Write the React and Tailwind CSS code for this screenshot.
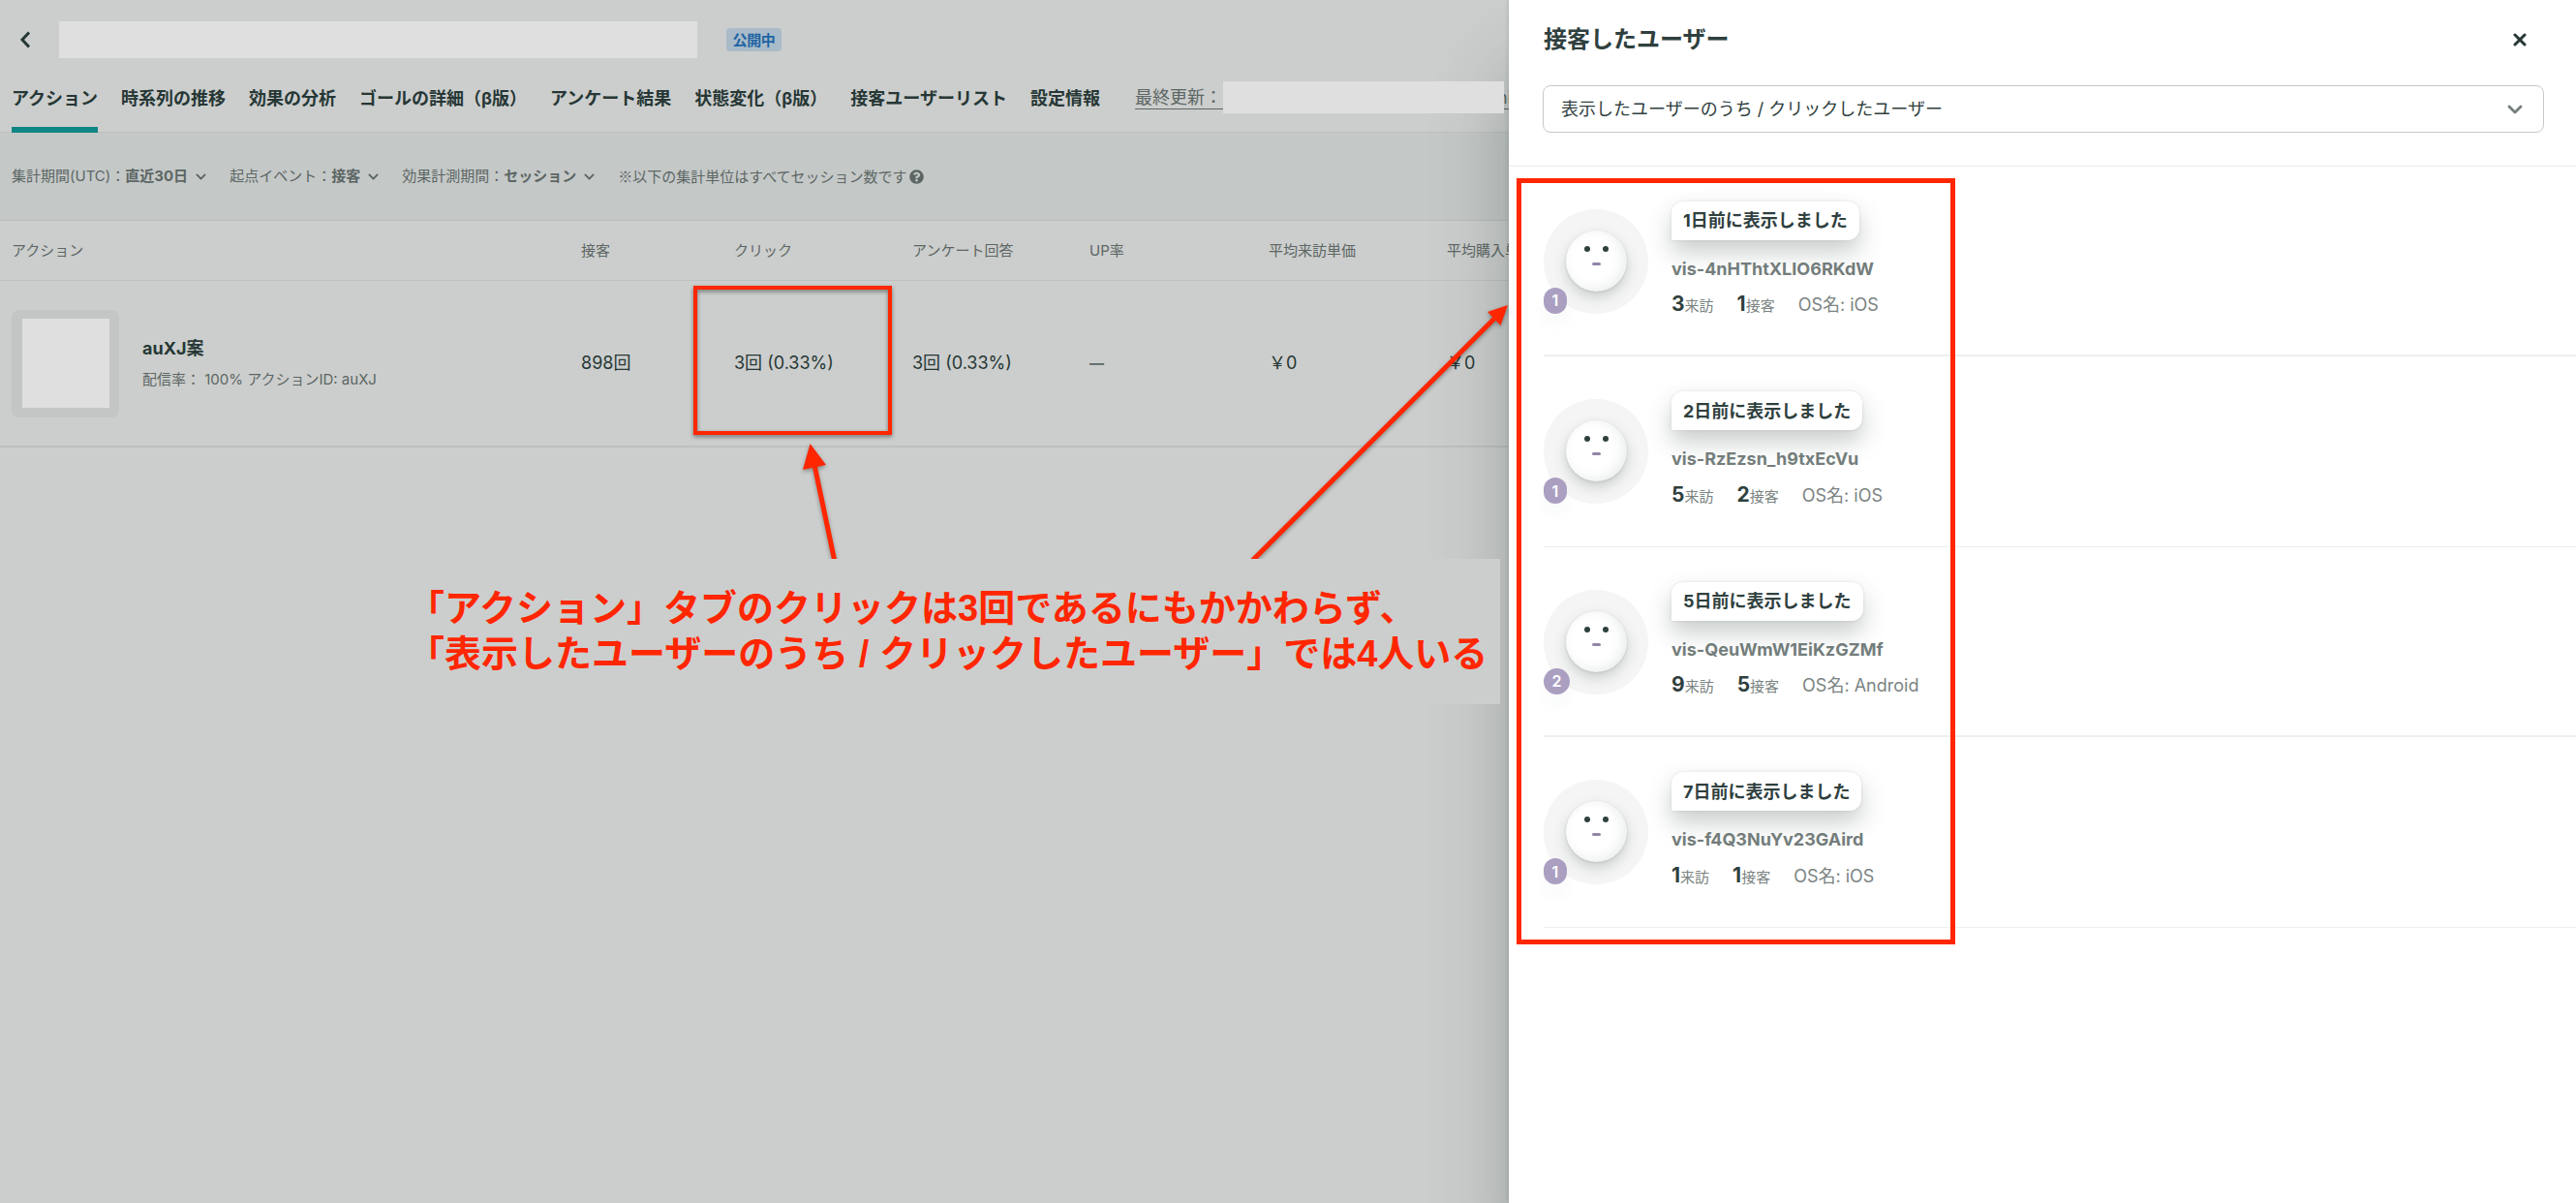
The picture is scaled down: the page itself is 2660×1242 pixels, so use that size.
import React from 'react';
import { FaQuestionCircle } from 'react-icons/fa';

const tabs = [
  'アクション',
  '時系列の推移',
  '効果の分析',
  'ゴールの詳細（β版）',
  'アンケート結果',
  '状態変化（β版）',
  '接客ユーザーリスト',
  '設定情報',
];

const filters = [
  { label: '集計期間(UTC)：', value: '直近30日' },
  { label: '起点イベント：', value: '接客' },
  { label: '効果計測期間：', value: 'セッション' },
];

const users = [
  { badge: 1, when: '1日前に表示しました', id: 'vis-4nHThtXLIO6RKdW', visits: 3, served: 1, os: 'iOS', line: 'border-b-2' },
  { badge: 1, when: '2日前に表示しました', id: 'vis-RzEzsn_h9txEcVu', visits: 5, served: 2, os: 'iOS', line: 'border-b' },
  { badge: 2, when: '5日前に表示しました', id: 'vis-QeuWmW1EiKzGZMf', visits: 9, served: 5, os: 'Android', line: 'border-b-2' },
  { badge: 1, when: '7日前に表示しました', id: 'vis-f4Q3NuYv23GAird', visits: 1, served: 1, os: 'iOS', line: 'border-b' },
];

const columns = 'grid grid-cols-[588px_158px_184px_183px_185px_184px_184px] pl-3 items-center';

const Chevron = ({ className }) => (
  <svg viewBox="0 0 16 10" fill="none" stroke="currentColor" strokeLinecap="round" strokeLinejoin="round" className={className}>
    <path d="M2 2l6 6 6-6" strokeWidth="2.8" />
  </svg>
);

const Header = () => (
  <header className="h-[137px] border-b border-[#bdc0bf]">
    <div className="flex h-[82px] items-center pl-5">
      <svg viewBox="0 0 12 18" fill="none" stroke="#263735" strokeWidth="3" className="h-[18px] w-3">
        <path d="M10 1.5L3 9l7 7.5" />
      </svg>
      <div className="ml-[29px] h-[38px] w-[659px] bg-[#dfdfdf]" />
      <span className="ml-[30px] flex h-6 w-[57px] items-center justify-center rounded bg-[#a9bbc9] pt-0.5 text-[15px] font-bold tracking-[-0.3px] text-[#1f65a3]">
        公開中
      </span>
    </div>
    <nav className="flex h-[55px] gap-6 pl-3 text-[18px] font-bold text-[#263735]">
      {tabs.map((tab, i) => (
        <a key={tab} className={`flex h-[55px] shrink-0 items-center whitespace-nowrap ${i === 0 ? 'border-b-[6px] border-[#0e8683] pb-[10px]' : 'pb-4'}`}>
          {tab}
        </a>
      ))}
      <div className="ml-3 flex h-[39px] shrink-0 items-center whitespace-nowrap font-normal text-[#5c6664]">
        <span className="w-[91px] border-b border-[#5c6664] leading-[22px]">最終更新：</span>
        <span className="relative z-10 -mt-0.5 h-[33px] w-[290px] shrink-0 bg-[#dfdfdf]" />
        <span className="-ml-[7px] border-b border-[#5c6664] leading-[22px]">ni</span>
      </div>
    </nav>
  </header>
);

const Filters = () => (
  <div className="flex h-[91px] items-center border-b border-[#b8bcbb] bg-[#c4c8c7] pl-3 text-[15px] text-[#5c6664]">
    {filters.map((f) => (
      <div key={f.label} className="mr-6 flex items-center whitespace-nowrap">
        {f.label}
        <b>{f.value}</b>
        <Chevron className="ml-2 h-[7px] w-[11px]" />
      </div>
    ))}
    <span className="whitespace-nowrap font-['Noto_Sans_CJK_JP',sans-serif]">※以下の集計単位はすべてセッション数です</span>
    <FaQuestionCircle className="ml-0.5 size-[15px]" />
  </div>
);

const Table = () => (
  <section>
    <div className={`${columns} h-[62px] whitespace-nowrap border-b border-[#bdc0bf] pt-0.5 text-[15px] text-[#5c6664]`}>
      <span>アクション</span>
      <span>接客</span>
      <span>クリック</span>
      <span>アンケート回答</span>
      <span>UP率</span>
      <span>平均来訪単価</span>
      <span>平均購入単価</span>
    </div>
    <div className={`${columns} h-[172px] whitespace-nowrap border-b-2 border-[#bdc0bf] text-[18px] text-[#263735]`}>
      <div className="flex items-center">
        <div className="flex size-[111px] items-center justify-center rounded-lg bg-[#c3c6c5]">
          <div className="h-[92px] w-[90px] bg-[#dfdfdf]" />
        </div>
        <div className="ml-6 flex flex-col gap-2 pt-0.5">
          <b className="leading-6">auXJ案</b>
          <span className="text-[15px] leading-6 text-[#5c6664]">配信率： 100% アクションID: auXJ</span>
        </div>
      </div>
      <span className="pb-0.5">898回</span>
      <span className="pb-0.5">3回 (0.33%)</span>
      <span className="pb-0.5">3回 (0.33%)</span>
      <span className="text-[15px] font-bold text-[#5c6664]">—</span>
      <span className="pb-0.5">￥0</span>
      <span className="pb-0.5">￥0</span>
    </div>
  </section>
);

const Avatar = ({ count }) => (
  <div className="relative mt-2 size-[108px] shrink-0 rounded-full bg-[#f5f5f5]">
    <div className="absolute left-[23px] top-[22px] size-[63px] rounded-full bg-white shadow-[0_6px_14px_rgba(38,55,53,0.2),0_1px_3px_rgba(38,55,53,0.12),inset_-4px_-2px_12px_rgba(38,55,53,0.09)]">
      <span className="absolute left-[19px] top-[16px] size-[6px] rounded-full bg-[#2f403e]" />
      <span className="absolute left-[38px] top-[16px] size-[6px] rounded-full bg-[#2f403e]" />
      <span className="absolute left-[27px] top-[33px] h-[3px] w-[9px] rounded-full bg-[#9186a8]" />
    </div>
    <span className="absolute bottom-0 left-0 flex h-[27px] items-center rounded-full bg-[#aa9fc1] px-[8.5px] text-[16px] font-semibold text-white shadow-[0_12px_18px_rgba(38,55,53,0.03)]">
      {count}
    </span>
  </div>
);

const UserItem = ({ user }) => (
  <li className={`ml-9 flex h-[196.5px] pt-9 ${user.line} border-[#eeefef]`}>
    <Avatar count={user.badge} />
    <div className="ml-6 whitespace-nowrap text-[18px]">
      <div className="flex h-10 w-fit items-center rounded-xl rounded-bl-none bg-white px-3 font-bold text-[#2f403e] shadow-[0_12px_24px_rgba(38,55,53,0.25),0_0_3px_rgba(38,55,53,0.12)]">
        {user.when}
      </div>
      <div className="mt-[18px] font-bold leading-6 text-[#737d7b]">{user.id}</div>
      <div className="mt-[12.5px] flex items-baseline gap-6 leading-6 text-[#7b8482]">
        <span className="text-[15px]"><b className="text-[21px] text-[#2f403e]">{user.visits}</b>来訪</span>
        <span className="text-[15px]"><b className="text-[21px] text-[#2f403e]">{user.served}</b>接客</span>
        <span>OS名: {user.os}</span>
      </div>
    </div>
  </li>
);

const Drawer = () => (
  <aside className="absolute inset-y-0 right-0 w-[1102px] bg-white shadow-[0_72px_72px_rgba(38,55,53,0.3),0_0_4px_rgba(38,55,53,0.25)]">
    <div className="h-[171.5px] border-b border-[#e9ebea] pl-[35px] pr-[33px]">
      <div className="flex h-[88px] items-center justify-between pb-[7px] pl-px text-2xl font-bold text-[#2f403e]">
        接客したユーザー
        <svg viewBox="0 0 14 14" stroke="#263735" strokeWidth="3" strokeLinecap="round" className="mr-[18px] size-[14px]">
          <path d="M2 2l10 10M12 2L2 12" />
        </svg>
      </div>
      <div className="flex h-[49px] items-center justify-between rounded-lg border border-[#c6c9c8] pl-[18px] pr-[21px] text-[18px] text-[#2f403e]">
        表示したユーザーのうち / クリックしたユーザー
        <Chevron className="h-[10px] w-4 text-[#737d7b]" />
      </div>
    </div>
    <ul>
      {users.map((u) => (
        <UserItem key={u.id} user={u} />
      ))}
    </ul>
  </aside>
);

// Red frames, arrows and caption laid over the screen
const Annotations = () => (
  <div className="pointer-events-none absolute inset-0">
    <div className="absolute left-[716px] top-[295px] h-[154px] w-[205px] border-4 border-[#ff2600] drop-shadow-[0_2px_2px_rgba(0,0,0,0.45)]" />
    <div className="absolute left-[1566px] top-[184px] h-[791px] w-[453px] border-[5px] border-[#ff2600]" />
    <svg viewBox="0 0 2660 577" className="absolute left-0 top-0 h-[577px] w-[2660px] overflow-hidden drop-shadow-[0_2px_2px_rgba(0,0,0,0.35)]" stroke="#ff2600" strokeWidth="5" fill="none">
      <path d="M841 480L862 580" />
      <path d="M1543 329L1292 580" />
      <path d="M836.5 458L829 485L853 480Z" fill="#ff2600" stroke="none" />
      <path d="M1557 315L1536 322L1549.5 336Z" fill="#ff2600" stroke="none" />
    </svg>
    <div className="absolute left-[421px] top-[577px] h-[150px] w-[1128px] whitespace-nowrap bg-[#cccecd] pt-[28px] font-['Liberation_Sans','Noto_Sans_CJK_JP',sans-serif] text-[38px] font-bold leading-[46.5px] text-[#ff2600]">
      <div>「アクション」タブのクリックは3回であるにもかかわらず、</div>
      <div>「表示したユーザーのうち / クリックしたユーザー」では4人いる</div>
    </div>
  </div>
);

export default function App() {
  return (
    <div className="relative h-[1242px] w-[2660px] overflow-hidden bg-[#cccecd] font-['Inter','Noto_Sans_CJK_JP',sans-serif]">
      <main className="w-[1558px] overflow-hidden">
        <Header />
        <Filters />
        <Table />
      </main>
      <Drawer />
      <Annotations />
    </div>
  );
}
